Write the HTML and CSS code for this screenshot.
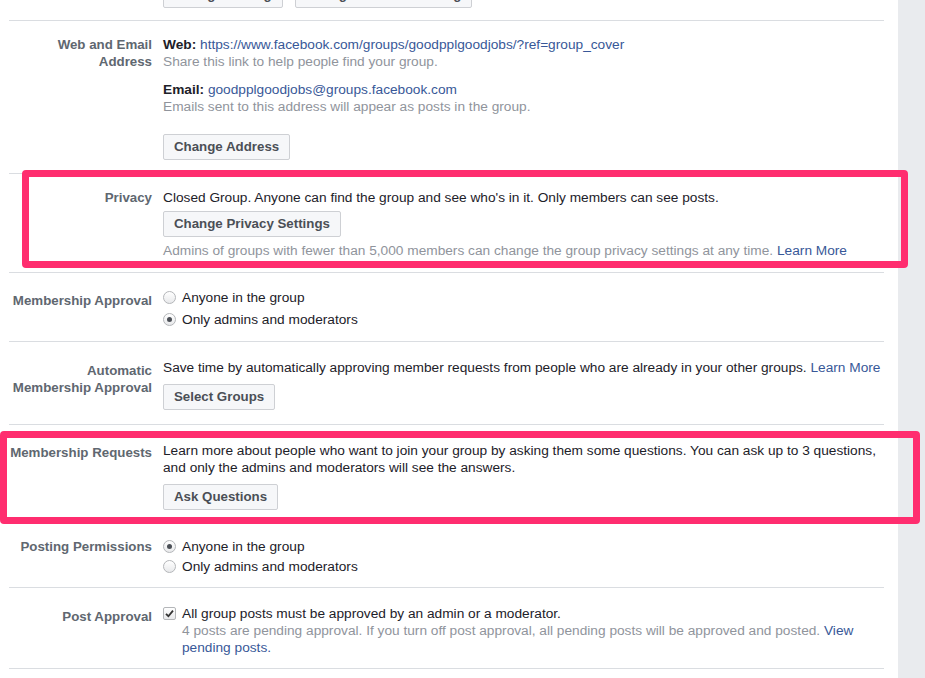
FILE: index.html
```html
<!DOCTYPE html>
<html>
<head>
    <title>Group Settings</title>
    <link rel="stylesheet" href="styles.css">
</head>
<body>
    <div class="page">
        <main class="settings">
            <div class="row row-top">
                <div class="label"></div>
                <div class="value top-buttons">
                    <button class="btn">Change Setting</button>
                    <button class="btn">Change Shortcut Setting</button>
                </div>
            </div>

            <div class="row row-web">
                <div class="label">Web and Email<br>Address</div>
                <div class="value">
                    <p><b>Web:</b> <a href="#">https://www.facebook.com/groups/goodpplgoodjobs/?ref=group_cover</a></p>
                    <p class="muted">Share this link to help people find your group.</p>
                    <p class="email"><b>Email:</b> <a href="#">goodpplgoodjobs@groups.facebook.com</a></p>
                    <p class="muted">Emails sent to this address will appear as posts in the group.</p>
                    <button class="btn btn-address">Change Address</button>
                </div>
            </div>

            <div class="row row-privacy">
                <div class="label">Privacy</div>
                <div class="value">
                    <p>Closed Group. Anyone can find the group and see who's in it. Only members can see posts.</p>
                    <button class="btn btn-gap">Change Privacy Settings</button>
                    <p class="muted note">Admins of groups with fewer than 5,000 members can change the group privacy settings at any time. <a href="#">Learn More</a></p>
                </div>
                <div class="highlight highlight-privacy"></div>
            </div>

            <div class="row row-approval">
                <div class="label label-approval">Membership Approval</div>
                <div class="value options">
                    <label class="option"><span class="radio"></span>Anyone in the group</label>
                    <label class="option"><span class="radio checked"></span>Only admins and moderators</label>
                </div>
            </div>

            <div class="row row-auto">
                <div class="label label-low">Automatic<br>Membership Approval</div>
                <div class="value">
                    <p>Save time by automatically approving member requests from people who are already in your other groups. <a href="#">Learn More</a></p>
                    <button class="btn btn-gap-lg">Select Groups</button>
                </div>
            </div>

            <div class="row row-requests">
                <div class="label label-req">Membership Requests</div>
                <div class="value">
                    <p>Learn more about people who want to join your group by asking them some questions. You can ask up to 3 questions,<br>and only the admins and moderators will see the answers.</p>
                    <button class="btn btn-gap-lg">Ask Questions</button>
                </div>
                <div class="highlight highlight-requests"></div>
            </div>

            <div class="row row-posting">
                <div class="label label-req">Posting Permissions</div>
                <div class="value options options-tight">
                    <label class="option"><span class="radio checked"></span>Anyone in the group</label>
                    <label class="option"><span class="radio"></span>Only admins and moderators</label>
                </div>
            </div>

            <div class="row row-post-approval">
                <div class="label label-low">Post Approval</div>
                <div class="value check-line">
                    <span class="checkbox">
                        <svg width="9" height="9" viewBox="0 0 9 9"><path d="M1 4.8 L3.4 7.2 L8 1.6" fill="none" stroke="#333" stroke-width="1.8"/></svg>
                    </span>
                    <div>
                        <p>All group posts must be approved by an admin or a moderator.</p>
                        <p class="muted">4 posts are pending approval. If you turn off post approval, all pending posts will be approved and posted. <a href="#">View pending posts.</a></p>
                    </div>
                </div>
            </div>
        </main>
        <aside class="rail"></aside>
    </div>
</body>
</html>
```

FILE: styles.css
```css
body {
    margin: 0;
    font-family: "Liberation Sans", Helvetica, Arial, sans-serif;
    font-size: 13.7px;
    line-height: 17px;
    color: #1d2129;
    background-color: #fff;
    overflow: hidden;
}

.page {
    display: flex;
    min-height: 678px;
}

.settings {
    width: 898px;
    box-sizing: border-box;
    padding: 0 14px 0 9px;
    background-color: #fff;
}

.rail {
    flex: 1;
    background-color: #e9ebee;
}

p {
    margin: 0;
}

a {
    color: #385898;
    text-decoration: none;
}

b {
    font-weight: bold;
}

.muted {
    color: #90949c;
}

/* --- rows --- */
.row {
    position: relative;
    display: grid;
    grid-template-columns: 143px 1fr;
    column-gap: 11px;
    border-bottom: 1px solid #dadde1;
}

.label {
    text-align: right;
    font-size: 13.3px;
    font-weight: bold;
    color: #606770;
    white-space: nowrap;
}

.label-low {
    padding-top: 3px;
}

.label-req {
    padding-top: 2px;
}

.label-approval {
    padding-top: 5px;
}

.row-top {
    margin-top: -18px;
    padding-bottom: 12px;
}

.top-buttons {
    display: flex;
    gap: 12px;
}

.row-web {
    padding: 15px 0 13px;
}

.email {
    margin-top: 11px;
}

.row-privacy {
    padding: 15px 0 13px;
}

.note {
    margin-top: 5px;
}

.row-approval {
    padding: 14px 0 12px;
}

.row-auto {
    padding: 17px 0 14px;
}

.row-requests {
    padding: 17px 0 11px;
}

.row-posting {
    padding: 14px 0 11px;
}

.row-post-approval {
    padding: 17px 0 12px;
}

/* --- buttons --- */
.btn {
    display: block;
    height: 26px;
    box-sizing: border-box;
    padding: 0 10px;
    background-color: #f6f7f9;
    border: 1px solid #ced0d4;
    border-radius: 2px;
    color: #4b4f56;
    font-family: inherit;
    font-size: 13.3px;
    font-weight: bold;
    line-height: 24px;
}

.btn-address {
    margin-top: 19px;
}

.btn-gap {
    margin-top: 5px;
}

.btn-gap-lg {
    margin-top: 8px;
}

/* --- radios and checkbox --- */
.options {
    display: flex;
    flex-direction: column;
    gap: 2px;
}

.options-tight {
    gap: 0;
}

.option {
    display: flex;
    align-items: center;
    height: 20px;
}

.radio {
    width: 11px;
    height: 11px;
    margin-right: 6px;
    border: 1px solid #b4b6b9;
    border-radius: 50%;
    background: linear-gradient(#ffffff, #e8e9eb);
    display: flex;
    align-items: center;
    justify-content: center;
}

.radio.checked::after {
    content: "";
    width: 5px;
    height: 5px;
    border-radius: 50%;
    background-color: #4b4f56;
}

.check-line {
    display: flex;
    align-items: flex-start;
}

.checkbox {
    flex: none;
    width: 11px;
    height: 11px;
    margin: 2px 6px 0 0;
    border: 1px solid #b4b6b9;
    border-radius: 2px;
    background: linear-gradient(#ffffff, #e8e9eb);
    display: flex;
    align-items: center;
    justify-content: center;
}

/* --- red annotation frames --- */
.highlight {
    position: absolute;
    border: 7px solid #ff2d6f;
    border-radius: 4px;
    pointer-events: none;
}

.highlight-privacy {
    top: -4px;
    left: 13px;
    right: -24px;
    bottom: 4px;
}

.highlight-requests {
    top: 6px;
    left: -9px;
    right: -36px;
    bottom: -3px;
}
```
